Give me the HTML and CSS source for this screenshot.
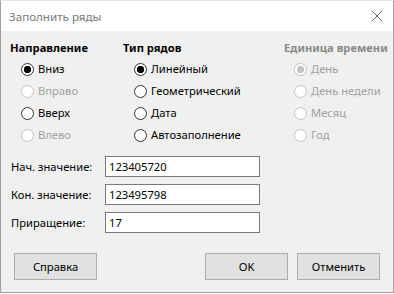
FILE: index.html
```html
<!DOCTYPE html>
<html lang="ru">
<head>
<meta charset="UTF-8">
<link rel="stylesheet" href="styles.css">
<title>Заполнить ряды</title>
</head>
<body>
<div class="window">
	<div class="titlebar">
		<span class="title">Заполнить ряды</span>
		<svg class="close" width="12" height="12" viewBox="0 0 12 12">
			<path d="M1 1 L11 11 M11 1 L1 11" stroke="#666" stroke-width="1" fill="none"/>
		</svg>
	</div>

	<div class="content">
		<div class="groups">
			<div class="group g-dir">
				<h3>Направление</h3>
				<label class="opt"><input type="radio" name="dir" checked> Вниз</label>
				<label class="opt off"><input type="radio" name="dir" disabled> Вправо</label>
				<label class="opt"><input type="radio" name="dir"> Вверх</label>
				<label class="opt off"><input type="radio" name="dir" disabled> Влево</label>
			</div>
			<div class="group g-type">
				<h3>Тип рядов</h3>
				<label class="opt"><input type="radio" name="typ" checked> Линейный</label>
				<label class="opt"><input type="radio" name="typ"> Геометрический</label>
				<label class="opt"><input type="radio" name="typ"> Дата</label>
				<label class="opt"><input type="radio" name="typ"> Автозаполнение</label>
			</div>
			<div class="group g-unit">
				<h3 class="off">Единица времени</h3>
				<label class="opt off"><input type="radio" name="unit" checked disabled> День</label>
				<label class="opt off"><input type="radio" name="unit" disabled> День недели</label>
				<label class="opt off"><input type="radio" name="unit" disabled> Месяц</label>
				<label class="opt off"><input type="radio" name="unit" disabled> Год</label>
			</div>
		</div>

		<div class="fields">
			<label class="lbl">Нач. значение:</label>
			<input class="val" type="text" value="123405720">
			<label class="lbl">Кон. значение:</label>
			<input class="val" type="text" value="123495798">
			<label class="lbl">Приращение:</label>
			<input class="val" type="text" value="17">
		</div>

		<div class="buttons">
			<button class="btn">Справка</button>
			<span class="spacer"></span>
			<button class="btn">OK</button>
			<button class="btn">Отменить</button>
		</div>
	</div>
</div>
</body>
</html>
```

FILE: styles.css
```css
* {
	box-sizing: border-box;
	margin: 0;
	padding: 0;
}

body {
	background: #fff;
	color: #000;
	font: 11.2px "Noto Sans", "Open Sans", sans-serif;
}

.window {
	width: 394px;
	height: 293px;
	border: 1px solid #a0a0a0;
	border-top-color: #e4e4e4;
	display: flex;
	flex-direction: column;
}

.titlebar {
	height: 30px;
	background: #fff;
	display: flex;
	align-items: center;
	padding: 0 9px 0 8px;
}

.title {
	color: #7a7a7a;
	flex: 1;
	font-size: 11.6px;
}

.close {
	margin-right: 1px;
}

.content {
	flex: 1;
	background: #f0f0f0;
	padding: 9px 13px 0 9px;
}

.groups {
	display: grid;
	grid-template-columns: 113px 160px 100px;
	white-space: nowrap;
}

h3 {
	font-size: 11.2px;
	font-weight: bold;
	line-height: 16px;
	margin-bottom: 2px;
}

h3.off {
	color: #8a8a8a;
}

.g-unit h3 {
	margin-left: 1px;
}

.opt {
	display: flex;
	align-items: center;
	height: 22px;
	padding-left: 11px;
	gap: 4px;
	line-height: 14px;
}

.g-unit .opt {
	padding-left: 11px;
}

.off {
	color: #a0a0a0;
}

.opt input {
	appearance: none;
	flex: none;
	width: 13px;
	height: 13px;
	border: 1px solid #333;
	border-radius: 50%;
	background: #fff;
}

.opt input:checked {
	background: radial-gradient(circle, #000 3.4px, #fff 4px);
}

.opt input:disabled {
	border-color: #c4c4c4;
}

.opt input:disabled:checked {
	background: radial-gradient(circle, #c4c4c4 3.4px, #fff 4px);
}

.fields {
	display: grid;
	grid-template-columns: 94px 155px;
	row-gap: 7px;
	margin-top: 10px;
	padding-left: 1px;
	align-items: center;
}

.val {
	height: 21px;
	border: 1px solid #7a7a7a;
	background: #fff;
	font: inherit;
	padding: 0 3px;
	color: #000;
}

.buttons {
	display: flex;
	gap: 9px;
	margin-top: 20px;
	padding-left: 4px;
}

.spacer {
	flex: 1;
}

.btn {
	width: 83px;
	height: 27px;
	background: #e1e1e1;
	border: 1px solid #adadad;
	font: inherit;
	color: #000;
}
```
